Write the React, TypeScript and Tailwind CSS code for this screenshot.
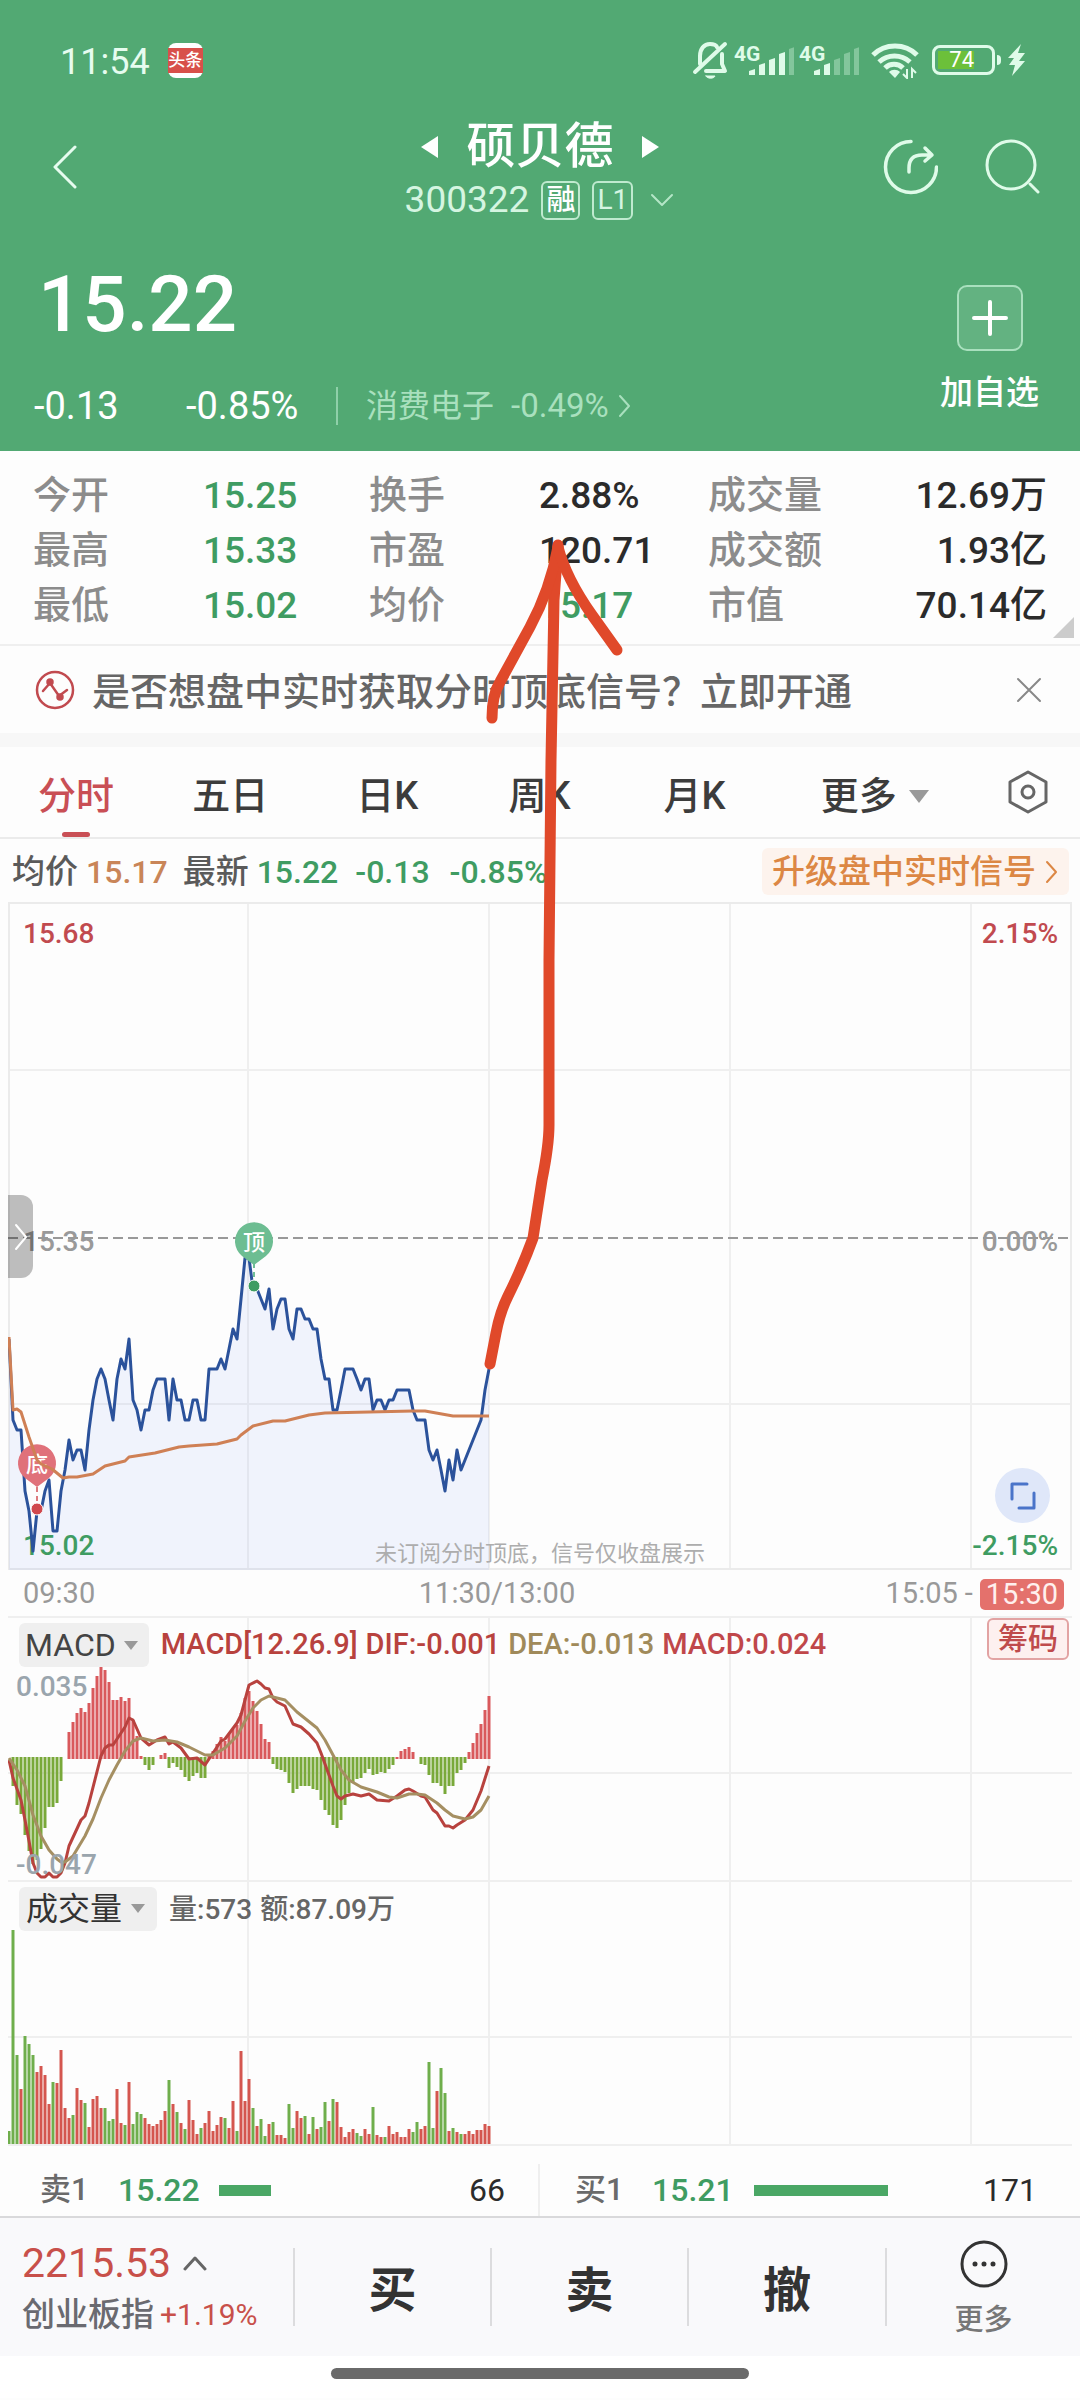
import { useState } from "react";

// price of every minute, counted in cents below the 15.35 close
const prices = [
  10, 18, 19, 19, 25, 27, 31, 27, 27, 25, 24, 29, 29, 25, 23, 20, 22, 21, 21, 23, 19, 16, 14, 13, 14, 16, 18, 14, 12, 13,
  10, 16, 17, 19, 17, 17, 15, 14, 14, 14, 18, 14, 16, 16, 18, 18, 16, 16, 18, 18, 13, 13, 13, 12, 13, 11, 9, 10, 6, 2,
  2, 5, 5, 6, 7, 5, 9, 7, 6, 6, 9, 10, 7, 7, 8, 8, 9, 9, 12, 14, 14, 17, 17, 15, 13, 13, 13, 14, 15, 14,
  14, 17, 16, 16, 17, 16, 16, 15, 15, 15, 15, 17, 18, 18, 18, 21, 22, 21, 23, 25, 22, 24, 21, 23, 22, 21, 20, 19, 18, 15, 13,
];

const average =
  "1,435 5,508 9,507 13,510 21,535 29,558 33,562 44,567 55,576 61,575 69,575 85,572 97,564 117,559 121,555 147,551 171,545 181,544 209,542 229,537 233,533 245,524 265,519 277,519 301,513 317,511 405,509 417,509 445,514 481,514";

const macd = [
  0, -27, -46, -55, -76, -92, -105, -101, -90, -69, -48, -48, -44, -22, 0, 27, 37, 46, 51, 47, 56, 71, 83, 92, 89, 77, 59, 59, 62, 58,
  61, 39, 23, 3, -6, -11, -6, 0, 4, 6, -9, -4, -8, -11, -18, -22, -17, -14, -19, -19, 4, 8, 15, 22, 18, 25, 30, 34, 46, 61,
  68, 58, 48, 35, 20, 17, -5, -10, -11, -13, -24, -34, -30, -27, -27, -27, -30, -31, -41, -51, -56, -66, -69, -61, -46, -34, -24, -20, -19, -14,
  -10, -16, -15, -13, -14, -10, -6, 2, 8, 10, 12, 7, 0, -5, -6, -16, -24, -24, -27, -35, -27, -27, -14, -11, -4, 7, 16, 26, 35, 49, 63,
];

// [minute, distance from the zero line]
const dif = [
  [0, -1], [1, -19], [3, -41], [4, -61], [5, -82], [6, -104], [7, -114], [8, -118], [9, -118], [10, -114], [11, -118], [12, -118],
  [13, -114], [14, -104], [15, -87], [18, -61], [19, -57], [20, -44], [23, 3], [24, 11], [25, 14], [26, 14], [29, 32], [30, 41],
  [31, 39], [33, 21], [35, 14], [37, 19], [39, 22], [40, 15], [41, 17], [43, 11], [45, 0], [47, 1], [49, -6], [51, 6], [53, 18],
  [54, 20], [57, 36], [58, 44], [60, 74], [62, 78], [63, 75], [64, 71], [65, 70], [66, 61], [67, 57], [69, 53], [71, 35], [73, 32],
  [75, 25], [77, 16], [78, 6], [81, -27], [82, -37], [83, -40], [84, -37], [86, -35], [88, -37], [90, -35], [92, -41], [95, -42],
  [97, -37], [99, -31], [100, -30], [101, -32], [103, -37], [104, -38], [106, -51], [107, -54], [109, -67], [110, -67], [111, -69],
  [112, -66], [114, -61], [116, -51], [118, -32], [120, -7],
];

const dea = [
  [0, 1], [2, -11], [4, -27], [6, -56], [8, -77], [10, -91], [12, -100], [13, -103], [14, -103], [16, -97], [19, -77], [21, -60],
  [23, -39], [25, -21], [27, -6], [29, 8], [31, 18], [33, 21], [36, 18], [39, 19], [42, 17], [45, 12], [49, 4], [51, 4], [54, 11],
  [57, 23], [59, 38], [61, 51], [63, 59], [65, 63], [69, 59], [72, 47], [77, 31], [79, 19], [81, 4], [83, -11], [85, -21],
  [88, -28], [92, -33], [95, -38], [97, -39], [100, -35], [102, -35], [104, -36], [107, -44], [109, -51], [111, -57], [114, -60],
  [116, -58], [118, -51], [120, -37],
];

// negative = falling minute (green)
const volumes = [
  -13, -214, -89, 55, -108, -100, -89, 72, 78, 69, 40, -62, 61, 94, 36, 26, -29, 56, 44, -41, 17, 45, 48, 36, -36, -23, -25, 55, 21, -19,
  62, -20, -32, -30, 26, 20, 18, 20, 24, 33, -64, 40, -32, 21, -15, 44, 24, 10, -16, 21, 33, 13, 19, 27, -26, 16, 43, -13, 93, 43,
  65, -36, 18, -25, -8, 20, -22, 9, 9, 6, -40, -16, 33, 26, -28, 10, -27, 15, -17, -42, 23, -45, 42, 17, 7, 12, 15, -11, -8, 15,
  10, -37, 9, 7, -7, 18, 10, 12, 7, 7, 15, -12, -22, 15, 18, -82, -16, 53, -76, -51, 13, -16, 12, -10, 10, 13, 10, 14, 14, 20, 18,
];

const quotes = [
  { label: "今开", value: "15.25", color: "text-[#3f9c62]" },
  { label: "换手", value: "2.88%", color: "text-[#2b2b2b]" },
  { label: "成交量", value: "12.69万", color: "text-[#2b2b2b] text-right" },
  { label: "最高", value: "15.33", color: "text-[#3f9c62]" },
  { label: "市盈", value: "120.71", color: "text-[#2b2b2b]" },
  { label: "成交额", value: "1.93亿", color: "text-[#2b2b2b] text-right" },
  { label: "最低", value: "15.02", color: "text-[#3f9c62]" },
  { label: "均价", value: "15.17", color: "text-[#3f9c62]" },
  { label: "市值", value: "70.14亿", color: "text-[#2b2b2b] text-right" },
];

const tabs = ["分时", "五日", "日K", "周K", "月K", "更多"];

const minuteX = (i: number) => 1 + i * 4;
const toPoints = (line: number[][]) => line.map(([i, v]) => `${minuteX(i)},${143 - v}`).join(" ");

const Chevron = ({ d, w, h, className }: { d: string; w: number; h: number; className: string }) => (
  <svg width={w} height={h} viewBox={`0 0 ${w} ${h}`} fill="none" stroke="currentColor" strokeLinecap="round" strokeLinejoin="round" className={className}>
    <path d={d} />
  </svg>
);

const Signal = ({ strong }: { strong: number }) => (
  <svg width="60" height="34" viewBox="0 0 60 34" fill="#dffbe9">
    <text x="0" y="18" fontSize="21" fontWeight="700">4G</text>
    {[6, 12, 17, 23, 28].map((h, i) => (
      <path key={h} opacity={i < strong ? 1 : 0.35} d={`M${15 + i * 10} 32v${2 - h}l6 -2v${h}z`} />
    ))}
  </svg>
);

const StatusBar = () => (
  <div className="flex h-[44px] items-center justify-between pl-[60px] pr-[54px] text-[#e6fcef]">
    <div className="flex items-center gap-[18px]">
      <span className="pt-[4px] text-[36px] leading-[44px]">11:54</span>
      <span className="flex h-[35px] w-[35px] items-center rounded-[8px] bg-white">
        <span className="w-full bg-[#d8504a] text-center text-[17px] font-medium leading-[25px] text-white">头条</span>
      </span>
    </div>
    <div className="flex items-center">
      <svg width="38" height="40" viewBox="0 0 38 40" fill="none" stroke="#dffbe9" strokeWidth="4" strokeLinecap="round" strokeLinejoin="round">
        <path d="M8 24V16c0-7 4-12 10-12 3 0 6 1 7 3M30 14v10l3 7H14M33 4L3 32" />
        <path d="M14 36h9c-1 3-8 3-9 0z" fill="#dffbe9" strokeWidth="1" />
      </svg>
      <div className="ml-1 flex gap-[5px]">
        <Signal strong={4} />
        <Signal strong={2} />
      </div>
      <svg className="ml-[12px]" width="48" height="38" viewBox="0 0 48 38" fill="none" stroke="#dffbe9" strokeWidth="5">
        <path d="M2 14c12-12 32-12 44 0M8 21c9-8 22-8 31 0M14 27c5-5 13-5 18 0" />
        <path d="M18 31c3-3 8-3 11 0l-5 6z" fill="#dffbe9" stroke="none" />
        <path d="M36 28v9l-4-4M41 37v-9l4 4" strokeWidth="2" />
      </svg>
      <div className="ml-[13px] h-[30px] w-[63px] rounded-[8px] border-[3px] border-[#dffbe9] p-[3px]">
        <div className="flex h-full w-[36px] items-center justify-end bg-[#6cc03a] text-[22px] leading-none text-white">74</div>
      </div>
      <span className="ml-[2px] h-[10px] w-[4px] rounded-r bg-[#dffbe9]" />
      <svg className="ml-[7px]" width="18" height="32" viewBox="0 0 18 32" fill="#dffbe9">
        <path d="M13 0L0 14h6l-5 7h6L4 32 17 17h-6l6-8h-7z" />
      </svg>
    </div>
  </div>
);

const Header = () => (
  <header className="bg-[#52a973] pb-[23px] pt-[38px] text-white">
    <StatusBar />
    <div className="mt-[32px] grid grid-cols-[1fr_auto_1fr] items-center px-[40px]">
      <button aria-label="返回" className="ml-3 justify-self-start">
        <Chevron w={26} h={44} d="M23 2L3 22l20 20" className="stroke-[3px] text-[#e6fcef]" />
      </button>
      <div className="flex flex-col items-center">
        <div className="flex h-[66px] items-center gap-[28px]">
          <button aria-label="上一只">
            <svg width="17" height="22" viewBox="0 0 17 22" fill="white"><path d="M17 0v22L0 11z" /></svg>
          </button>
          <h1 className="text-[49px] font-medium leading-[66px]">硕贝德</h1>
          <button aria-label="下一只">
            <svg width="17" height="22" viewBox="0 0 17 22" fill="white"><path d="M0 0v22l17-11z" /></svg>
          </button>
        </div>
        <div className="flex h-[40px] items-center gap-[12px] text-[#d5f5e1]">
          <span className="text-[37px] leading-[40px]">300322</span>
          <span className="flex h-[39px] w-[39px] items-center justify-center rounded-[6px] border-2 border-[#bfeacf] text-[29px] font-medium leading-none text-white">融</span>
          <span className="flex h-[39px] w-[41px] items-center justify-center rounded-[6px] border-2 border-[#bfeacf] text-[28px] leading-none">L1</span>
          <Chevron w={26} h={16} d="M3 3l10 10L23 3" className="ml-1 stroke-2 text-[#b4e6c7]" />
        </div>
      </div>
      <div className="flex items-center gap-[46px] justify-self-end text-[#dffbe9]">
        <button aria-label="分享">
          <svg width="56" height="56" viewBox="0 0 56 56" fill="none" stroke="currentColor" strokeWidth="3.5" strokeLinecap="round" strokeLinejoin="round">
            <path d="M29 2.500A25.500 25.500 0 1 0 54.500 28" />
            <path d="M27 33v-4c0-9 5-13 13-13h9M43 9l7 7-7 6" />
          </svg>
        </button>
        <button aria-label="搜索">
          <svg width="56" height="56" viewBox="0 0 56 56" fill="none" stroke="currentColor" strokeWidth="3" strokeLinecap="round">
            <circle cx="27" cy="26" r="24" />
            <path d="M46 45l8 8" />
          </svg>
        </button>
      </div>
    </div>
    <div className="mt-[45px] flex items-start justify-between pl-[34px] pr-[41px]">
      <div>
        <p className="pl-[4px] text-[78px] font-medium leading-[80px]">15.22</p>
        <div className="mt-[39px] flex items-center text-[38px] leading-[44px]">
          <span className="w-[152px]">-0.13</span>
          <span className="w-[150px]">-0.85%</span>
          <a href="#sector" className="flex items-center border-l-2 border-[#8fd0a9] pl-[28px] leading-[38px] text-[#a9e0be]">
            <span className="text-[32px]">消费电子</span>
            <span className="ml-[17px] text-[33px]">-0.49%</span>
            <Chevron w={16} h={24} d="M3 2l9 10-9 10" className="ml-[8px] stroke-2" />
          </a>
        </div>
      </div>
      <button className="mt-[20px] flex flex-col items-center">
        <span className="flex h-[66px] w-[66px] items-center justify-center rounded-[10px] border-2 border-[#a9e0be] bg-white/10">
          <Chevron w={36} h={36} d="M18 2v32M2 18h32" className="stroke-[4px] text-white" />
        </span>
        <span className="mt-[21px] text-[33px] font-medium leading-[42px]">加自选</span>
      </button>
    </div>
  </header>
);

const Caret = () => (
  <svg width="20" height="13" viewBox="0 0 20 13" fill="#999"><path d="M0 0h20L10 13z" /></svg>
);

const PriceChart = () => {
  const line = prices.map((p, i) => `${minuteX(i)},${Math.round(336 + p * 10.1)}`).join(" ");

  return (
    <div className="relative">
      <svg viewBox="0 0 1064 668" className="block w-full">
        <path d="M0 168H1064M0 502H1064M240 0V668M481 0V668M722 0V668M963 0V668" stroke="#efefef" strokeWidth="2" />
        <rect x="1" y="1" width="1062" height="666" fill="none" stroke="#ebebeb" strokeWidth="2" />
        <polygon points={`1,668 ${line} 481,668`} fill="#4670f0" fillOpacity="0.07" />
        <path d="M0 336H1064" stroke="#999" strokeWidth="2" strokeDasharray="10 5" />
        <g fontSize="28" fontWeight="500">
          <text x="15" y="41" fill="#c14a4f">15.68</text>
          <text x="15" y="349" fill="#999">15.35</text>
          <text x="15" y="653" fill="#3f9c62">15.02</text>
          <g textAnchor="end">
            <text x="1050" y="41" fill="#c14a4f">2.15%</text>
            <text x="1050" y="349" fill="#999">0.00%</text>
            <text x="1050" y="653" fill="#3f9c62">-2.15%</text>
          </g>
        </g>
        <text x="367" y="659" fontSize="22" fill="#adadad">未订阅分时顶底，信号仅收盘展示</text>
        <polyline points={line} fill="none" stroke="#2b529b" strokeWidth="3" strokeLinejoin="round" />
        <g>
          <path d="M246 361v18" stroke="#6fbe96" strokeWidth="2" strokeDasharray="5 4" />
          <path d="M234 354l12 9 12-9a19 19 0 1 0-24 0z" fill="#6dbd92" />
          <text x="246" y="348" fontSize="22" fontWeight="500" fill="#fff" textAnchor="middle">顶</text>
          <circle cx="246" cy="384" r="6" fill="#3f9c62" stroke="#fff" />
        </g>
        <g>
          <path d="M29 585v18" stroke="#dd7a7e" strokeWidth="2" strokeDasharray="5 4" />
          <path d="M17 576l12 9 12-9a19 19 0 1 0-24 0z" fill="#e0717a" />
          <text x="29" y="570" fontSize="22" fontWeight="500" fill="#fff" textAnchor="middle">底</text>
          <circle cx="29" cy="607" r="6" fill="#d0484d" stroke="#fff" />
        </g>
        <polyline points={average} fill="none" stroke="#cf8055" strokeWidth="3" strokeLinejoin="round" />
      </svg>
      <button aria-label="展开" className="absolute left-0 top-[293px] flex h-[83px] w-[25px] items-center justify-center rounded-r-[12px] bg-black/25">
        <Chevron w={14} h={28} d="M2 2l10 12L2 26" className="stroke-2 text-white" />
      </button>
      <button aria-label="全屏" className="absolute right-[22px] top-[566px] flex h-[55px] w-[55px] items-center justify-center rounded-full bg-[#dfe7f9]">
        <Chevron w={26} h={28} d="M2 17V2h15M24 11v15H9" className="stroke-[3px] text-[#4a74c9]" />
      </button>
    </div>
  );
};

const MacdChart = () => (
  <div className="relative">
    <svg viewBox="0 0 1064 264" className="block w-full">
      <path d="M0 1H1064M0 157H1064M240 0V264M481 0V264M722 0V264M963 0V264" stroke="#efefef" strokeWidth="2" />
      {macd.map((v, i) => (
        <path key={i} d={`M${minuteX(i)} ${v < 0 ? 141 : 143}V${143 - v}`} stroke={v > 0 ? "#d9595c" : "#79a93a"} strokeWidth="3" />
      ))}
      <polyline points={toPoints(dif)} fill="none" stroke="#b8423e" strokeWidth="3" strokeLinejoin="round" />
      <polyline points={toPoints(dea)} fill="none" stroke="#a58f62" strokeWidth="3" strokeLinejoin="round" />
      <g fontSize="28" fontWeight="500" fill="#9aa5ad">
        <text x="8" y="80">0.035</text>
        <text x="8" y="258">-0.047</text>
      </g>
    </svg>
    <div className="absolute inset-x-0 top-0 flex items-start justify-between pl-[11px] pr-[3px]">
      <div className="mt-[7px] flex items-center text-[29px] font-medium">
        <button className="flex h-[44px] items-center gap-[8px] rounded-[6px] bg-[#efefef] pl-[6px] pr-[11px] text-[32px] font-normal text-[#444]">
          MACD
          <svg width="14" height="9" viewBox="0 0 14 9" fill="#999"><path d="M0 0h14L7 9z" /></svg>
        </button>
        <span className="ml-[12px] text-[#b8423e]">MACD[12.26.9]</span>
        <span className="ml-2 text-[#b8423e]">DIF:-0.001</span>
        <span className="ml-2 text-[#a08a5a]">DEA:-0.013</span>
        <span className="ml-2 text-[#c0474a]">MACD:0.024</span>
      </div>
      <button className="mt-[2px] h-[42px] rounded-[6px] border-2 border-[#e2a3a3] bg-[#fdf0ef] px-[9px] text-[30px] font-medium leading-[38px] text-[#bf4b4c]">筹码</button>
    </div>
  </div>
);

const VolumeChart = () => (
  <div className="relative">
    <svg viewBox="0 0 1064 266" className="block w-full">
      <path d="M0 1H1064M0 157H1064M0 265H1064M240 0V266M481 0V266M722 0V266M963 0V266" stroke="#efefef" strokeWidth="2" />
      {volumes.map((v, i) => (
        <path key={i} d={`M${minuteX(i)} 264V${264 - Math.abs(v)}`} stroke={v > 0 ? "#d4564f" : "#6fae4c"} strokeWidth="3" />
      ))}
    </svg>
    <div className="absolute left-[11px] top-[6px] flex items-center text-[28px] font-medium text-[#666]">
      <button className="flex h-[44px] items-center gap-[9px] rounded-[6px] bg-[#efefef] pl-[7px] pr-[12px] text-[32px] font-normal text-[#333]">
        成交量
        <svg width="14" height="9" viewBox="0 0 14 9" fill="#999"><path d="M0 0h14L7 9z" /></svg>
      </button>
      <span className="ml-[12px] pt-[3px]">量:573</span>
      <span className="ml-[8px] pt-[3px]">额:87.09万</span>
    </div>
  </div>
);

const App: React.FC = () => {
  const [activeTab, setActiveTab] = useState("分时");
  const [showNotice, setShowNotice] = useState(true);

  return (
    <div className="relative min-h-screen overflow-hidden bg-[#fdfdfd] font-['Roboto','Noto_Sans_CJK_SC',sans-serif]">
      <Header />

      <section className="relative px-[33px] pb-[11px] pt-[17px]">
        <dl className="grid grid-cols-[336fr_339fr_339fr] text-[37px] leading-[55px]">
          {quotes.map((q) => (
            <div key={q.label} className="flex">
              <dt className="w-[170px] shrink-0 text-[38px] font-medium text-[#8c8c8c]">{q.label}</dt>
              <dd className={`grow font-medium ${q.color}`}>{q.value}</dd>
            </div>
          ))}
        </dl>
        <svg className="absolute bottom-[6px] right-[6px]" width="21" height="21" viewBox="0 0 21 21" fill="#ccc"><path d="M21 0v21H0z" /></svg>
      </section>

      {showNotice && (
        <div className="flex h-[89px] items-center border-t-2 border-[#efefef] pl-[35px] pr-[38px]">
          <svg width="40" height="40" viewBox="0 0 40 40" fill="none" stroke="#c14a4f" strokeWidth="2.500" strokeLinecap="round">
            <circle cx="20" cy="20" r="18" />
            <path d="M8 21l7-8 9 13 8-6" />
            <circle cx="15" cy="12" r="2.500" fill="#c14a4f" />
            <circle cx="25" cy="27" r="2.500" fill="#c14a4f" />
          </svg>
          <a href="#signal" className="ml-[17px] grow pt-[4px] text-[38px] font-medium leading-[56px] text-[#666]">是否想盘中实时获取分时顶底信号？立即开通</a>
          <button aria-label="关闭" onClick={() => setShowNotice(false)}>
            <Chevron w={26} h={26} d="M2 2l22 22M24 2L2 24" className="stroke-2 text-[#888]" />
          </button>
        </div>
      )}
      <div className="h-[14px] bg-[#f7f7f7]" />

      <nav className="grid h-[92px] grid-cols-[154fr_164fr_152fr_155fr_157fr_187fr_40fr] items-center border-b-2 border-[#ebebeb] pl-[38px] pr-[32px]">
        {tabs.map((tab) => (
          <button
            key={tab}
            onClick={() => setActiveTab(tab)}
            className={`relative flex h-full items-center gap-[12px] justify-self-start pt-[8px] text-[38px] font-medium ${activeTab === tab ? "text-[#c94f55]" : "text-[#3c3c3c]"}`}
          >
            {tab}
            {tab === "更多" && <Caret />}
            {activeTab === tab && <span className="absolute bottom-0 left-1/2 h-[5px] w-[28px] -translate-x-1/2 rounded bg-[#c94f55]" />}
          </button>
        ))}
        <button aria-label="设置">
          <svg width="40" height="44" viewBox="0 0 40 44" fill="none" stroke="#666" strokeWidth="3" strokeLinejoin="round">
            <path d="M20 2l18 10v20L20 42 2 32V12z" />
            <circle cx="20" cy="22" r="6" />
          </svg>
        </button>
      </nav>

      <div className="flex h-[63px] items-center pl-[12px] pr-[11px] pt-[2px] text-[32px] font-medium text-[#3f9c62]">
        <span className="text-[33px] text-[#5a5a5a]">均价</span>
        <span className="ml-[8px] text-[#c98558]">15.17</span>
        <span className="ml-[15px] text-[33px] text-[#5a5a5a]">最新</span>
        <span className="ml-[8px]">15.22</span>
        <span className="ml-[17px]">-0.13</span>
        <span className="ml-[20px]">-0.85%</span>
        <button className="ml-auto flex h-[47px] items-center rounded-[6px] bg-[#fdf3ed] pl-[10px] pr-[9px] text-[33px] leading-[47px] text-[#dc8744]">
          升级盘中实时信号
          <Chevron w={16} h={26} d="M3 3l9 10-9 10" className="ml-[8px] stroke-2" />
        </button>
      </div>

      <main className="px-2">
        <PriceChart />
        <div className="grid h-[46px] grid-cols-[396fr_467fr_184fr] items-center pl-[15px] pr-[2px] pt-[2px] text-[29px] text-[#999]">
          <span>09:30</span>
          <span>11:30/13:00</span>
          <span className="flex items-center justify-end gap-[7px] pr-[6px]">
            15:05 <span>-</span>
            <span className="rounded-[5px] bg-[#e4716c] px-[6px] leading-[31px] text-[#fff0ee]">15:30</span>
          </span>
        </div>
        <MacdChart />
        <VolumeChart />
      </main>

      <section className="mt-[18px] grid grid-cols-2 text-[32px] leading-[52px]">
        <div className="flex items-center border-r-2 border-[#efefef] pl-[40px] pr-[33px]">
          <span className="w-[78px] text-[31px] font-medium text-[#6a6a6a]">卖1</span>
          <span className="w-[101px] font-medium text-[#3f9c62]">15.22</span>
          <span className="h-[11px] w-[52px] bg-[#4aa765]" />
          <span className="ml-auto text-[#2b2b2b]">66</span>
        </div>
        <div className="flex items-center pl-[35px] pr-[43px]">
          <span className="w-[77px] text-[31px] font-medium text-[#6a6a6a]">买1</span>
          <span className="w-[102px] font-medium text-[#3f9c62]">15.21</span>
          <span className="h-[11px] w-[134px] bg-[#4aa765]" />
          <span className="ml-auto text-[#2b2b2b]">171</span>
        </div>
      </section>

      <footer className="grid h-[140px] grid-cols-[293fr_197fr_197fr_198fr_195fr] items-center border-t-2 border-[#d9d9db] bg-[#f9f9fb]">
        <button className="pl-[22px] text-left">
          <span className="flex items-center gap-[12px] text-[41px] leading-[56px] text-[#c8504a]">
            2215.53
            <Chevron w={24} h={16} d="M2 14L12 3l10 11" className="stroke-[3px] text-[#666]" />
          </span>
          <span className="flex items-center gap-[6px] whitespace-nowrap text-[33px] font-medium leading-[48px] text-[#6a6a70]">
            创业板指 <span className="text-[30px] font-normal text-[#c8504a]">+1.19%</span>
          </span>
        </button>
        {["买", "卖", "撤"].map((action) => (
          <button key={action} className="h-[78px] border-l-2 border-[#dcdcde] pt-[8px] text-[48px] font-bold leading-[70px] text-[#333]">
            {action}
          </button>
        ))}
        <button className="flex h-[78px] flex-col items-center justify-center border-l-2 border-[#dcdcde] pt-[5px] text-[29px] font-medium leading-[40px] text-[#777]">
          <svg width="48" height="48" viewBox="0 0 48 48" fill="none" stroke="#333" strokeWidth="3" className="shrink-0">
            <circle cx="24" cy="24" r="22" />
            <path d="M15 24h.01M24 24h.01M33 24h.01" strokeWidth="5" strokeLinecap="round" />
          </svg>
          <span className="mt-[12px]">更多</span>
        </button>
      </footer>
      <div className="flex h-[42px] items-center justify-center bg-white pb-[7px]">
        <span className="h-[11px] w-[418px] rounded-full bg-[#6a6a6a]" />
      </div>

      {/* hand-drawn arrow */}
      <svg viewBox="0 0 1080 2400" className="pointer-events-none absolute left-0 top-0 w-full" fill="none" stroke="#e0492a" strokeWidth="11" strokeLinecap="round" strokeLinejoin="round">
        <path d="M490 1364L496 1333Q500 1312 508 1296Q522 1268 533 1238L542 1180Q549 1145 549 1125V960L551 760L554 600L558 545" />
        <path d="M558 547Q550 590 530 627L500 682Q492 695 492 718" />
        <path d="M558 547Q566 578 592 615L617 650" />
      </svg>
    </div>
  );
};

export default App;
